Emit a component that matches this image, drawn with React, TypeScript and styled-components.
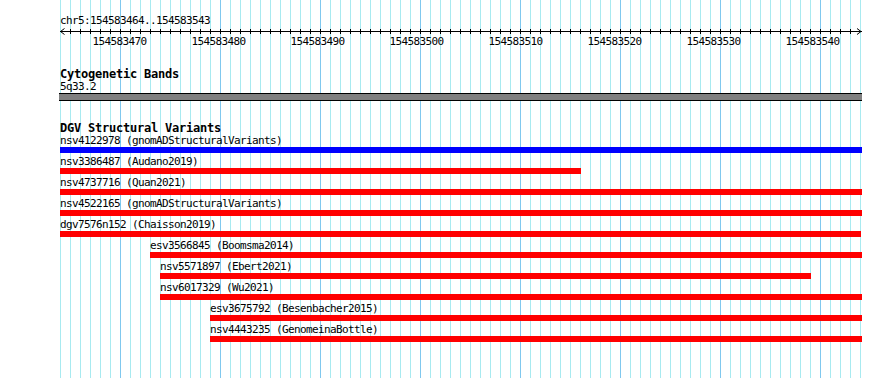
import styled, { createGlobalStyle } from "styled-components";

const GlobalStyle = createGlobalStyle`
    html, body {
        margin: 0;
        padding: 0;
        background: #ffffff;
        overflow: hidden;
    }
`;

const Page = styled.div`
    display: flex;
    padding-left: 60px;
    height: 378px;
    font-family: "DejaVu Sans Mono", "Liberation Mono", monospace;
    font-size: 11px;
    letter-spacing: -0.62px;
    line-height: 12px;
    color: #000;
`;

const Canvas = styled.div`
    display: flex;
    flex-direction: column;
    width: 802px;
    height: 100%;
    background:
        linear-gradient(to right, #80c8ee 1px, transparent 1px) 60px 0 / 100px 100% repeat-x,
        linear-gradient(to right, #a8eaf0 1px, transparent 1px) 0 0 / 10px 100% repeat-x;
`;

const Ruler = styled.div`
    display: flex;
    flex-direction: column;
    padding-top: 15px;
`;

const Location = styled.div`
    white-space: nowrap;
`;

const Axis = styled.svg`
    display: block;
    margin-top: 1px;
`;

const TickLabels = styled.div`
    display: flex;
    padding-left: 10px;
    margin-top: 1px;
`;

const TickLabel = styled.div`
    width: 100px;
    text-align: center;
    white-space: nowrap;
`;

const Track = styled.div<{ $gap: number }>`
    display: flex;
    flex-direction: column;
    margin-top: ${(p) => p.$gap}px;
`;

const TrackTitle = styled.div`
    font-weight: bold;
    font-size: 12px;
    letter-spacing: -0.22px;
    line-height: 13px;
    white-space: nowrap;
`;

const BandLabel = styled.div`
    white-space: nowrap;
`;

const BandBar = styled.div`
    height: 6px;
    margin-left: -1px;
    background: #808080;
    border-top: 1px solid #000;
    border-bottom: 1px solid #000;
`;

const FeatureRow = styled.div`
    display: flex;
    flex-direction: column;
    align-items: flex-start;
    margin-bottom: 3px;
`;

const FeatureLabel = styled.div`
    white-space: nowrap;
`;

const FeatureBar = styled.div<{ $color: string }>`
    height: 6px;
    background: ${(p) => p.$color};
`;

const ticks = [470, 480, 490, 500, 510, 520, 530, 540];

const features = [
    { name: "nsv4122978", study: "gnomADStructuralVariants", start: 0, end: 802, color: "#0000ff" },
    { name: "nsv3386487", study: "Audano2019", start: 0, end: 521, color: "#ff0000" },
    { name: "nsv4737716", study: "Quan2021", start: 0, end: 802, color: "#ff0000" },
    { name: "nsv4522165", study: "gnomADStructuralVariants", start: 0, end: 802, color: "#ff0000" },
    { name: "dgv7576n152", study: "Chaisson2019", start: 0, end: 801, color: "#ff0000" },
    { name: "esv3566845", study: "Boomsma2014", start: 90, end: 802, color: "#ff0000" },
    { name: "nsv5571897", study: "Ebert2021", start: 100, end: 751, color: "#ff0000" },
    { name: "nsv6017329", study: "Wu2021", start: 100, end: 802, color: "#ff0000" },
    { name: "esv3675792", study: "Besenbacher2015", start: 150, end: 802, color: "#ff0000" },
    { name: "nsv4443235", study: "GenomeinaBottle", start: 150, end: 802, color: "#ff0000" },
];

function ScaleAxis() {
    const width = 802;
    const marks = [];
    for (let x = 10; x < width - 4; x += 10) {
        marks.push(<line key={x} x1={x + 0.5} y1={1} x2={x + 0.5} y2={6} stroke="#000" />);
    }
    return (
        <Axis width={width} height={7} shapeRendering="crispEdges">
            <line x1={0} y1={3.5} x2={width} y2={3.5} stroke="#000" />
            {marks}
            <path d="M4.5 0.5 L0.5 3.5 L4.5 6.5" fill="none" stroke="#000" shapeRendering="auto" />
            <path d={`M${width - 5} 0.5 L${width - 1} 3.5 L${width - 5} 6.5`} fill="none" stroke="#000" shapeRendering="auto" />
        </Axis>
    );
}

export default function App() {
    return (
        <>
            <GlobalStyle />
            <Page>
                <Canvas>
                    <Ruler>
                        <Location>chr5:154583464..154583543</Location>
                        <ScaleAxis />
                        <TickLabels>
                            {ticks.map((t) => (
                                <TickLabel key={t}>154583{t}</TickLabel>
                            ))}
                        </TickLabels>
                    </Ruler>

                    <Track $gap={20}>
                        <TrackTitle>Cytogenetic Bands</TrackTitle>
                        <BandLabel>5q33.2</BandLabel>
                        <BandBar />
                    </Track>

                    <Track $gap={21}>
                        <TrackTitle>DGV Structural Variants</TrackTitle>
                        {features.map((f) => (
                            <FeatureRow key={f.name} style={{ marginLeft: f.start }}>
                                <FeatureLabel>
                                    {f.name} ({f.study})
                                </FeatureLabel>
                                <FeatureBar $color={f.color} style={{ width: f.end - f.start }} />
                            </FeatureRow>
                        ))}
                    </Track>
                </Canvas>
            </Page>
        </>
    );
}
